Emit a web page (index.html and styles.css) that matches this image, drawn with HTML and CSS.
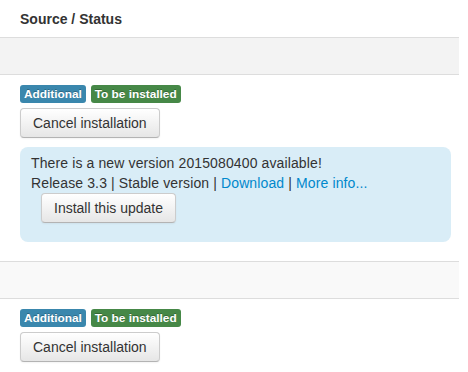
FILE: index.html
```html
<!DOCTYPE html>
<html lang="en">
<head>
    <meta charset="UTF-8">
    <meta name="viewport" content="width=device-width, initial-scale=1.0">
    <title>Source / Status</title>
    <link rel="stylesheet" href="styles.css">
</head>
<body>
    <table class="status-table">
        <thead>
            <tr>
                <th>Source / Status</th>
            </tr>
        </thead>
        <tbody>
            <tr class="row-dark">
                <td></td>
            </tr>
            <tr>
                <td>
                    <div class="labels">
                        <span class="label label-info">Additional</span>
                        <span class="label label-success">To be installed</span>
                    </div>
                    <button class="btn">Cancel installation</button>
                    <div class="alert">
                        <div class="alert-text">There is a new version 2015080400 available!</div>
                        <div class="alert-text">Release 3.3 | Stable version | <a href="#">Download</a> | <a href="#">More info...</a></div>
                        <button class="btn btn-update">Install this update</button>
                    </div>
                </td>
            </tr>
            <tr class="row-light">
                <td></td>
            </tr>
            <tr>
                <td>
                    <div class="labels">
                        <span class="label label-info">Additional</span>
                        <span class="label label-success">To be installed</span>
                    </div>
                    <button class="btn">Cancel installation</button>
                </td>
            </tr>
        </tbody>
    </table>
</body>
</html>
```

FILE: styles.css
```css
body {
    font-family: "Liberation Sans", Arial, sans-serif;
    font-size: 14px;
    line-height: 20px;
    color: #333;
    margin: 0;
    background-color: white;
}
.status-table {
    width: 459px;
    border-collapse: collapse;
    border-spacing: 0;
}
.status-table th {
    text-align: left;
    font-weight: bold;
    padding: 9px 8px 8px 20px;
}
.status-table td {
    border-top: 1px solid #ddd;
    padding: 8px 8px 8px 20px;
    height: 20px;
}
.row-dark td {
    background-color: #f3f3f3;
}
.row-light td {
    background-color: #f9f9f9;
}
.labels {
    height: 20px;
}
.label {
    display: inline-block;
    padding: 2px 4px;
    font-size: 11.844px;
    font-weight: bold;
    line-height: 14px;
    color: white;
    text-shadow: 0 -1px 0 rgba(0,0,0,0.25);
    border-radius: 3px;
    margin-right: 1px;
}
.label-info {
    background-color: #3a87ad;
}
.label-success {
    background-color: #468847;
}
.btn {
    display: block;
    margin-top: 5px;
    padding: 4px 12px;
    font-family: inherit;
    font-size: 14px;
    line-height: 20px;
    color: #333;
    background-color: #f5f5f5;
    background-image: linear-gradient(to bottom, #fff, #e6e6e6);
    border: 1px solid #ccc;
    border-bottom-color: #b3b3b3;
    border-radius: 4px;
    box-shadow: inset 0 1px 0 rgba(255,255,255,0.2), 0 1px 2px rgba(0,0,0,0.05);
}
.alert {
    margin: 9px 0 11px;
    padding: 6px 11px 19px;
    background-color: #d9edf7;
    border-radius: 8px;
}
.alert-text {
    letter-spacing: 0.12px;
}
.alert a {
    color: #0088cc;
    text-decoration: none;
}
.btn-update {
    margin: 0 0 0 10px;
}
```
